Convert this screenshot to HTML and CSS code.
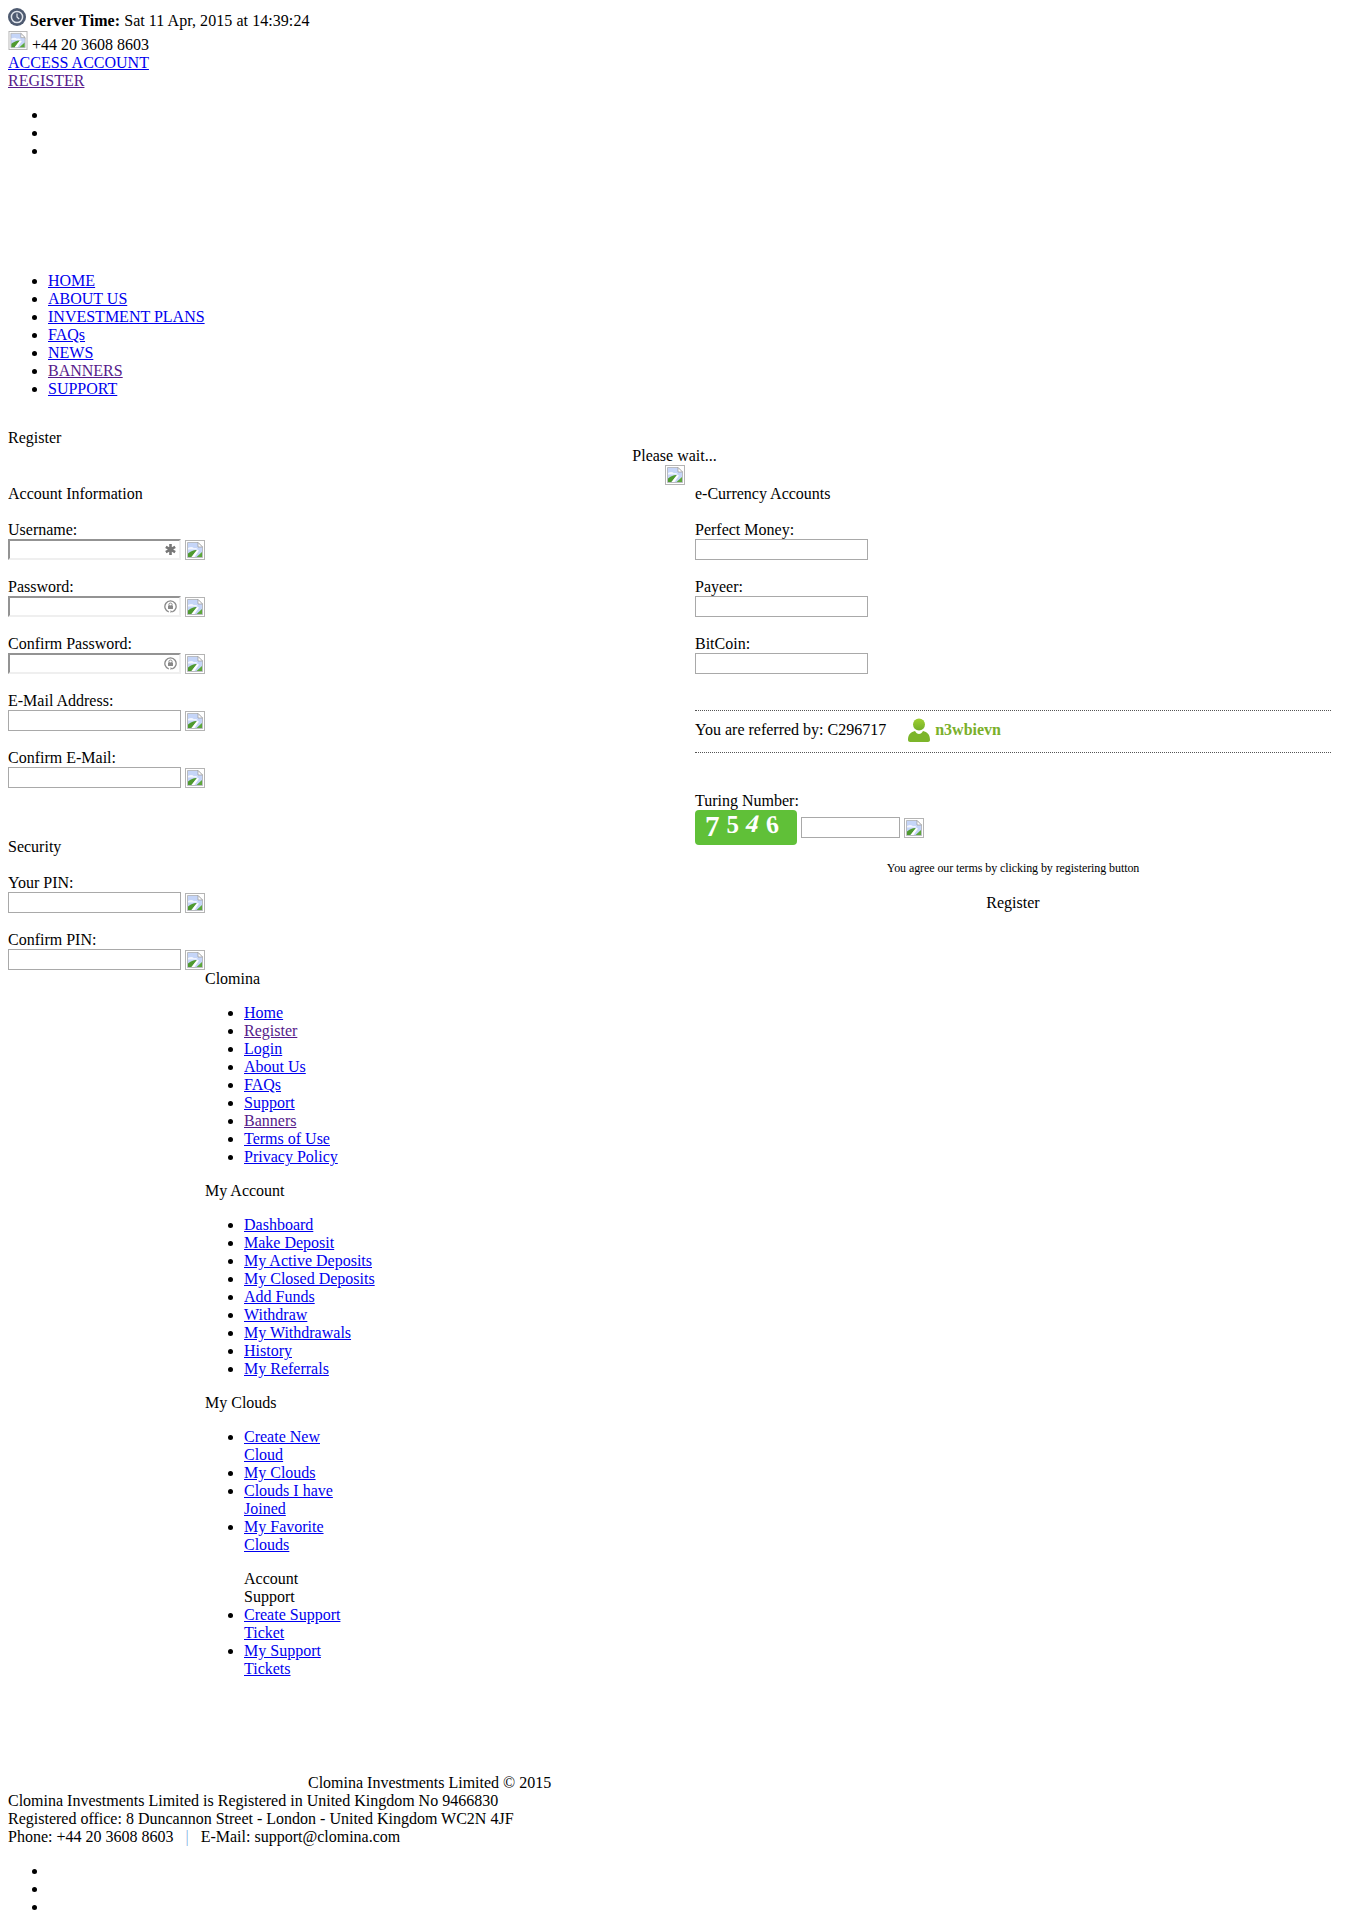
FILE: index.html
```html
<!DOCTYPE html>
<html lang="en">
<head>
<meta charset="utf-8">
<title>Clomina - Register</title>
<link rel="stylesheet" href="styles.css">
</head>
<body>
<svg class="defs" width="0" height="0" aria-hidden="true">
  <symbol id="broken" viewBox="0 0 20 20">
    <rect x="0.5" y="0.5" width="19" height="19" fill="#fff" stroke="#b4b4b4"/>
    <path d="M2.500 2.500h10.500l4.500 4.500v10.500H2.500z" fill="#c5d5f8" stroke="#a8a8a8" stroke-width="0.7"/>
    <path d="M13 2.500v4.500h4.500z" fill="#fff" stroke="#999" stroke-width="0.7"/>
    <path d="M3 8c2.500-1.500 4.500-1.200 6 .2 1.600-.7 3.400 0 4 1.300H3z" fill="#f2f6ff"/>
    <path d="M3 17v-3.500c3-2.500 6-3.800 9-3.500L6.500 17z" fill="#4f9a2f"/>
    <path d="M11.500 17l5.500-5v5z" fill="#5da83a"/>
    <path d="M6.500 17l5.500-7 2 .6L9.500 17z" fill="#fff"/>
  </symbol>
</svg>

<div class="top-time">
  <svg class="clock" viewBox="0 0 18 18" aria-hidden="true">
    <circle cx="9" cy="9" r="9" fill="#4e5a70"/>
    <circle cx="9" cy="9" r="5.600" fill="none" stroke="#dfe3ea" stroke-width="1.500"/>
    <path d="M9 5.600V9l2.200 2" fill="none" stroke="#dfe3ea" stroke-width="1.200"/>
  </svg>
  <b>Server Time:</b> Sat 11 Apr, 2015 at 14:39:24
</div>
<div class="top-phone"><svg class="broken broken-phone"><use href="#broken"/></svg> +44 20 3608 8603</div>
<div><a href="#">ACCESS ACCOUNT</a></div>
<div><a href="#" class="seen">REGISTER</a></div>

<ul class="blank">
  <li></li><li></li><li></li>
</ul>

<ul class="nav">
  <li><a href="#">HOME</a></li>
  <li><a href="#">ABOUT US</a></li>
  <li><a href="#">INVESTMENT PLANS</a></li>
  <li><a href="#">FAQs</a></li>
  <li><a href="#">NEWS</a></li>
  <li><a href="#" class="seen">BANNERS</a></li>
  <li><a href="#">SUPPORT</a></li>
</ul>

<div class="page-title">Register</div>
<div class="wait">Please wait...<br><svg class="broken"><use href="#broken"/></svg></div>

<div class="form">
  <div class="col-left">
    <div class="section">Account Information</div>
    <div class="field">
      <label>Username:</label>
      <div class="row">
        <span class="inset">
          <input class="inp inp-inset" type="text">
          <svg class="inp-icon" viewBox="0 0 12 12" aria-hidden="true"><path d="M6 1v10M1.700 3.500l8.600 5M10.300 3.500l-8.600 5" stroke="#777" stroke-width="2.400"/></svg>
        </span>
        <svg class="broken"><use href="#broken"/></svg>
      </div>
    </div>
    <div class="field">
      <label>Password:</label>
      <div class="row">
        <span class="inset">
          <input class="inp inp-inset" type="password">
          <svg class="inp-icon" viewBox="0 0 12 12" aria-hidden="true"><path d="M4.400 11A5.200 5.200 0 1 1 7.600 11" fill="none" stroke="#8a8a8a" stroke-width="1.200"/><path d="M6 9.400v2.600l1.800-1.300z" fill="#8a8a8a"/><circle cx="6" cy="4.300" r="1.500" fill="none" stroke="#888" stroke-width="0.900"/><rect x="3.700" y="5" width="4.600" height="3.400" rx="0.600" fill="#888"/></svg>
        </span>
        <svg class="broken"><use href="#broken"/></svg>
      </div>
    </div>
    <div class="field">
      <label>Confirm Password:</label>
      <div class="row">
        <span class="inset">
          <input class="inp inp-inset" type="password">
          <svg class="inp-icon" viewBox="0 0 12 12" aria-hidden="true"><path d="M4.400 11A5.200 5.200 0 1 1 7.600 11" fill="none" stroke="#8a8a8a" stroke-width="1.200"/><path d="M6 9.400v2.600l1.800-1.300z" fill="#8a8a8a"/><circle cx="6" cy="4.300" r="1.500" fill="none" stroke="#888" stroke-width="0.900"/><rect x="3.700" y="5" width="4.600" height="3.400" rx="0.600" fill="#888"/></svg>
        </span>
        <svg class="broken"><use href="#broken"/></svg>
      </div>
    </div>
    <div class="field">
      <label>E-Mail Address:</label>
      <div class="row"><input class="inp" type="text"><svg class="broken"><use href="#broken"/></svg></div>
    </div>
    <div class="field">
      <label>Confirm E-Mail:</label>
      <div class="row"><input class="inp" type="text"><svg class="broken"><use href="#broken"/></svg></div>
    </div>
    <div class="section section-gap">Security</div>
    <div class="field">
      <label>Your PIN:</label>
      <div class="row"><input class="inp" type="text"><svg class="broken"><use href="#broken"/></svg></div>
    </div>
    <div class="field field-last">
      <label>Confirm PIN:</label>
      <div class="row"><input class="inp" type="text"><svg class="broken"><use href="#broken"/></svg></div>
    </div>
  </div>

  <div class="col-right">
    <div class="section">e-Currency Accounts</div>
    <div class="field">
      <label>Perfect Money:</label>
      <div class="row"><input class="inp" type="text"></div>
    </div>
    <div class="field">
      <label>Payeer:</label>
      <div class="row"><input class="inp" type="text"></div>
    </div>
    <div class="field">
      <label>BitCoin:</label>
      <div class="row"><input class="inp" type="text"></div>
    </div>
    <div class="referred">
      <span>You are referred by: C296717</span>
      <svg class="person" viewBox="0 0 22 24" aria-hidden="true">
        <defs><linearGradient id="pg" x1="0" y1="0" x2="0" y2="1"><stop offset="0" stop-color="#9ed02f"/><stop offset="1" stop-color="#74ae2a"/></linearGradient></defs>
        <circle cx="11" cy="6.500" r="6" fill="url(#pg)"/>
        <path d="M0 22c0-6 3-8 7-9 1 2 2.500 3 4 3s3-1 4-3c4 1 7 3 7 9 0 1-1 2-2 2H2c-1 0-2-1-2-2z" fill="#7cb52a"/>
      </svg>
      <b class="ref-name">n3wbievn</b>
    </div>
    <div class="turing">
      <label>Turing Number:</label>
      <div class="row">
        <div class="captcha">
          <span class="digit digit-big">7</span>
          <span class="digit">5</span>
          <span class="digit digit-slant">4</span>
          <span class="digit digit-tilt">6</span>
        </div>
        <input class="inp inp-short" type="text">
        <svg class="broken"><use href="#broken"/></svg>
      </div>
    </div>
    <div class="agree">You agree our terms by clicking by registering button</div>
    <div class="submit">Register</div>
  </div>
</div>

<div class="links">
  <div>Clomina</div>
  <ul>
    <li><a href="#">Home</a></li>
    <li><a href="#" class="seen">Register</a></li>
    <li><a href="#">Login</a></li>
    <li><a href="#">About Us</a></li>
    <li><a href="#">FAQs</a></li>
    <li><a href="#">Support</a></li>
    <li><a href="#" class="seen">Banners</a></li>
    <li><a href="#">Terms of Use</a></li>
    <li><a href="#">Privacy Policy</a></li>
  </ul>
  <div>My Account</div>
  <ul>
    <li><a href="#">Dashboard</a></li>
    <li><a href="#">Make Deposit</a></li>
    <li><a href="#">My Active Deposits</a></li>
    <li><a href="#">My Closed Deposits</a></li>
    <li><a href="#">Add Funds</a></li>
    <li><a href="#">Withdraw</a></li>
    <li><a href="#">My Withdrawals</a></li>
    <li><a href="#">History</a></li>
    <li><a href="#">My Referrals</a></li>
  </ul>
  <div>My Clouds</div>
  <ul class="narrow">
    <li><a href="#">Create New Cloud</a></li>
    <li><a href="#">My Clouds</a></li>
    <li><a href="#">Clouds I have Joined</a></li>
    <li><a href="#">My Favorite Clouds</a></li>
    <li class="sub-head">Account Support</li>
    <li><a href="#">Create Support Ticket</a></li>
    <li><a href="#">My Support Tickets</a></li>
  </ul>
</div>

<div class="copy">Clomina Investments Limited &copy; 2015</div>
<div>Clomina Investments Limited is Registered in United Kingdom No 9466830</div>
<div>Registered office: 8 Duncannon Street - London - United Kingdom WC2N 4JF</div>
<div>Phone: +44 20 3608 8603 <span class="pipe">|</span> E-Mail: support@clomina.com</div>

<ul class="blank">
  <li></li><li></li><li></li>
</ul>
</body>
</html>
```
FILE: styles.css
```css
html, body {
  background: #fff;
}
body {
  margin: 8px;
  color: #000;
  font-family: "Liberation Serif", "Times New Roman", serif;
  font-size: 16px;
  line-height: 18px;
}
a {
  color: #00e;
}
a.seen {
  color: #551a8b;
}
.defs {
  display: block;
  position: absolute;
}
.broken {
  display: inline-block;
  width: 20px;
  height: 20px;
  vertical-align: -2px;
}
.broken-phone {
  height: 19px;
  vertical-align: 0;
}
.top-time {
  height: 22px;
  letter-spacing: 0.06px;
}
.clock {
  width: 18px;
  height: 18px;
  vertical-align: 0;
}
.top-phone {
  height: 23px;
  padding-top: 1px;
}
.blank,
.nav {
  margin: 16px 0;
  padding-left: 40px;
}
.blank li {
  height: 18px;
}
.nav {
  margin-top: 112px;
}
.page-title {
  margin-top: 31px;
}
.wait {
  text-align: center;
  height: 38px;
}
.form {
  display: grid;
  grid-template-columns: 687px 636px;
}
.section {
  margin-bottom: 18px;
}
.section-gap {
  margin-top: 50px;
}
.field {
  height: 39px;
  margin-bottom: 18px;
}
.field-last {
  margin-bottom: 0;
}
label {
  display: block;
}
.row {
  display: flex;
  align-items: center;
  gap: 4px;
}
.inset {
  position: relative;
  display: block;
  height: 21px;
}
.inp {
  box-sizing: border-box;
  display: block;
  width: 173px;
  height: 21px;
  margin: 0;
  padding: 1px 2px;
  border: 1px solid #a9a9a9;
  background: #fff;
  font: 13px "Liberation Sans", sans-serif;
}
.inp-inset {
  border: 2px solid;
  border-color: #939393 #efefef #efefef #939393;
}
.inp-short {
  width: 99px;
}
.inp-icon {
  position: absolute;
  right: 4px;
  top: 4px;
  width: 13px;
  height: 13px;
}
.referred {
  display: flex;
  align-items: center;
  box-sizing: border-box;
  height: 43px;
  padding-bottom: 4px;
  margin-top: 36px;
  border-top: 1px dotted #555;
  border-bottom: 1px dotted #555;
}
.person {
  width: 22px;
  height: 24px;
  margin: 0 5px 0 22px;
}
.ref-name {
  color: #7ab02a;
}
.turing {
  margin-top: 39px;
}
.captcha {
  display: flex;
  align-items: flex-start;
  gap: 7px;
  box-sizing: border-box;
  width: 102px;
  height: 35px;
  padding: 2px 0 0 10px;
  border-radius: 4px;
  background: #60c038;
  color: #fff;
  font: bold 25px/26px "Liberation Serif", serif;
}
.digit {
  display: block;
}
.digit-big {
  font-size: 29px;
  line-height: 29px;
}
.digit-slant {
  transform: skewX(-14deg) translateY(-1px);
}
.digit-tilt {
  transform: rotate(-8deg);
}
.agree {
  margin-top: 14px;
  text-align: center;
  font-size: 12px;
  letter-spacing: -0.08px;
}
.submit {
  margin-top: 17px;
  text-align: center;
}
.links {
  margin-left: 197px;
}
.links ul {
  margin: 16px 0;
  padding-left: 39px;
}
.links .narrow {
  width: 100px;
}
.sub-head {
  list-style: none;
  margin-top: 16px;
}
.copy {
  margin-top: 96px;
  padding-left: 300px;
}
.pipe {
  margin: 0 8px;
  color: #7fb0e0;
}
```
